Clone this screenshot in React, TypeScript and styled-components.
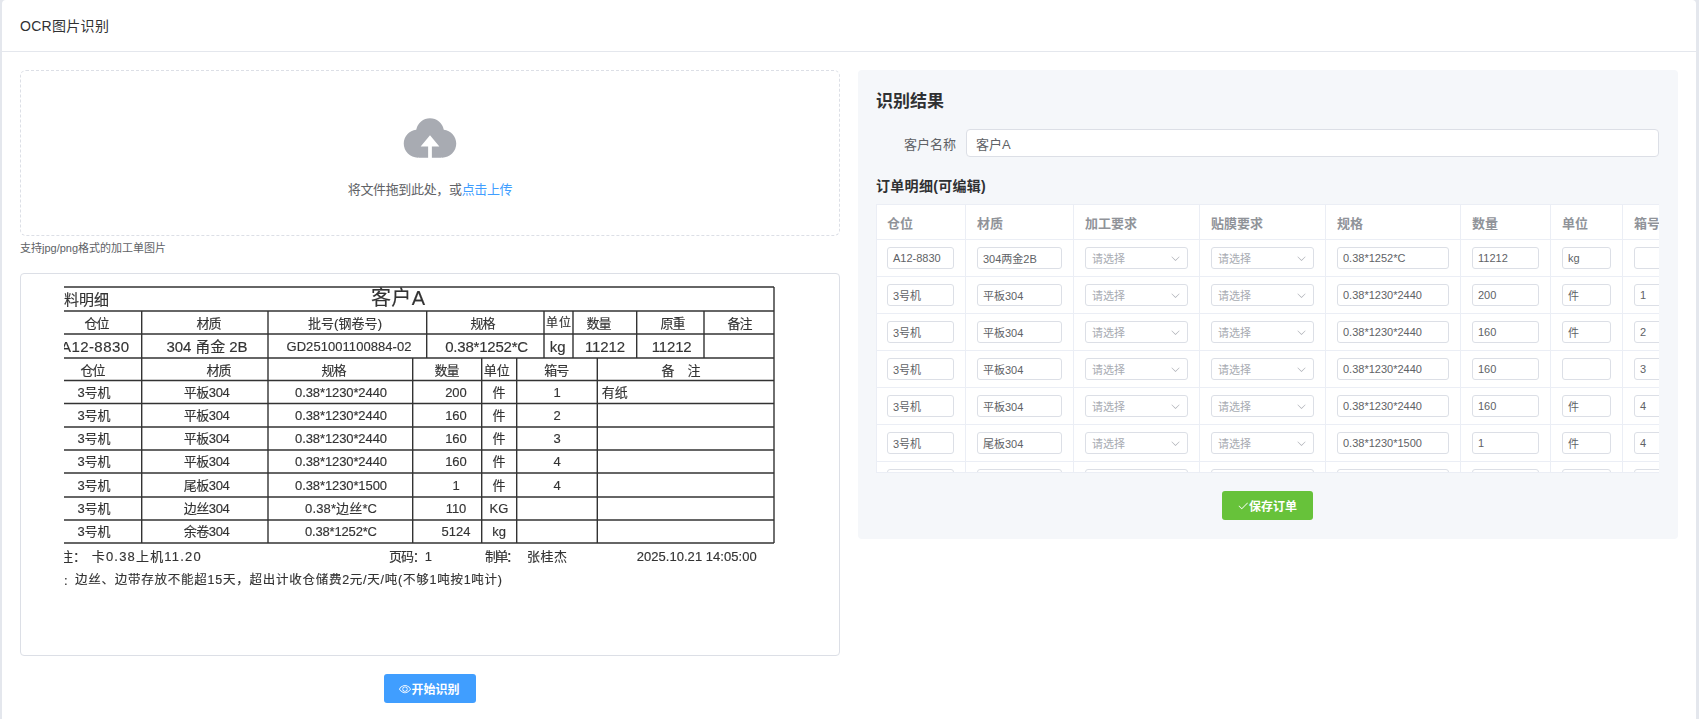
import React from "react";
import styled, { createGlobalStyle } from "styled-components";

const FONT = `"Liberation Sans", "Noto Sans CJK SC", sans-serif`;

const Global = createGlobalStyle`
  html, body { margin: 0; padding: 0; height: 100%; overflow: hidden; background: #e4e7ed; }
  #root { height: 100%; }
  * { box-sizing: border-box; }
`;

const Shell = styled.div`
  height: 100%;
  padding: 0 3px 0 2px;
  font-family: ${FONT};
  color: #303133;
`;
const Card = styled.div`
  height: 100%;
  background: #fff;
  border-radius: 4px 4px 0 0;
  overflow: hidden;
`;
const Header = styled.div`
  height: 52px;
  padding: 0 18px 1px;
  display: flex;
  align-items: center;
  font-size: 14px;
  letter-spacing: 0.3px;
  color: #303133;
  border-bottom: 1px solid #e4e7ed;
`;
const Body = styled.div`
  display: grid;
  grid-template-columns: 820px 820px;
  gap: 18px;
  padding: 18px;
  align-items: start;
`;
const Column = styled.div`
  display: flex;
  flex-direction: column;
`;
const Dropzone = styled.div`
  height: 166px;
  padding-top: 36px;
  border: 1px dashed #dcdfe6;
  border-radius: 6px;
  display: flex;
  flex-direction: column;
  align-items: center;
`;
const CloudIcon = styled.svg`
  width: 60px;
  height: 60px;
  fill: #a8abb2;
`;
const DropText = styled.div`
  margin-top: 13px;
  font-size: 13px;
  line-height: 20px;
  letter-spacing: -0.35px;
  color: #606266;
`;
const DropLink = styled.em`
  font-style: normal;
  color: #409eff;
`;
const Tip = styled.div`
  margin-top: 5px;
  font-size: 11px;
  line-height: 14px;
  color: #606266;
`;
const Preview = styled.div`
  margin-top: 18px;
  height: 383px;
  border: 1px solid #dcdfe6;
  border-radius: 4px;
  overflow: hidden;
`;
const Scan = styled.svg`
  display: block;
  width: 818px;
  height: 381px;
  filter: blur(0.3px);
  font-family: ${FONT};
  text { fill: #333; stroke: #333; stroke-width: 0.15px; dominant-baseline: central; }
  line { stroke: #333; stroke-width: 1.4; }
`;
const ActionRow = styled.div`
  margin-top: 18px;
  display: flex;
  justify-content: center;
`;
const ActionButton = styled.button<{ $tone: string }>`
  height: 29px;
  padding: 0 16px 0 15px;
  border: 0;
  border-radius: 3px;
  background: ${(p) => p.$tone};
  color: #fff;
  font-family: ${FONT};
  font-size: 12px;
  font-weight: 700;
  display: inline-flex;
  align-items: center;
`;
const BtnIcon = styled.svg`
  width: 12px;
  height: 12px;
  fill: currentColor;
`;
const Panel = styled.div`
  background: #f5f7fa;
  border-radius: 4px;
  padding: 20px 19px 19px 18px;
`;
const PanelTitle = styled.h3`
  margin: 0 0 15px;
  font-size: 17px;
  line-height: 24px;
  font-weight: 700;
  color: #303133;
`;
const FormRow = styled.div`
  display: flex;
  align-items: center;
`;
const FormLabel = styled.label`
  width: 90px;
  padding-right: 10px;
  text-align: right;
  font-size: 13px;
  color: #606266;
`;
const TextBox = styled.div`
  flex: 1;
  height: 28px;
  padding: 0 9px;
  display: flex;
  align-items: center;
  background: #fff;
  border: 1px solid #dcdfe6;
  border-radius: 4px;
  font-size: 13px;
  color: #606266;
`;
const SubTitle = styled.h4`
  margin: 19px 0 8px;
  font-size: 14px;
  line-height: 20px;
  letter-spacing: 0.3px;
  font-weight: 700;
  color: #303133;
`;
const TableWrap = styled.div`
  height: 269px;
  overflow: hidden;
  background: #fff;
  border: 1px solid #ebeef5;
  border-right: 0;
`;
const Table = styled.table`
  table-layout: fixed;
  width: 836px;
  border-collapse: separate;
  border-spacing: 0;
`;
const Th = styled.th`
  height: 35px;
  padding: 0 11px;
  text-align: left;
  font-size: 13px;
  font-weight: 700;
  color: #909399;
  white-space: nowrap;
  overflow: hidden;
  border-right: 1px solid #ebeef5;
  border-bottom: 1px solid #ebeef5;
  &:first-child { padding-left: 10px; }
`;
const Td = styled.td`
  height: 37px;
  padding: 7px 11px;
  border-right: 1px solid #ebeef5;
  border-bottom: 1px solid #ebeef5;
  &:first-child { padding-left: 10px; }
`;
const Field = styled.div`
  width: 100%;
  height: 22px;
  padding: 0 5px;
  display: flex;
  align-items: center;
  justify-content: space-between;
  background: #fff;
  border: 1px solid #dcdfe6;
  border-radius: 3px;
  font-size: 11px;
  color: #606266;
  white-space: nowrap;
`;
const SelectField = styled(Field)`
  padding: 0 6px;
  color: #a8abb2;
`;
const Chevron = styled.svg`
  width: 11px;
  height: 11px;
  fill: #a8abb2;
`;

const COLS = [89, 108, 126, 126, 135, 90, 72, 90];
const HEADS = ["仓位", "材质", "加工要求", "贴膜要求", "规格", "数量", "单位", "箱号"];
const ROWS: string[][] = [
  ["A12-8830", "304两金2B", "0.38*1252*C", "11212", "kg", ""],
  ["3号机", "平板304", "0.38*1230*2440", "200", "件", "1"],
  ["3号机", "平板304", "0.38*1230*2440", "160", "件", "2"],
  ["3号机", "平板304", "0.38*1230*2440", "160", "", "3"],
  ["3号机", "平板304", "0.38*1230*2440", "160", "件", "4"],
  ["3号机", "尾板304", "0.38*1230*1500", "1", "件", "4"],
  ["3号机", "边丝304", "0.38*边丝*C", "110", "KG", ""],
];

const SelectCell = () => (
  <Td>
    <SelectField>
      请选择
      <Chevron viewBox="0 0 1024 1024">
        <path d="M831.872 340.864 512 652.672 192.128 340.864a30.592 30.592 0 0 0-42.752 0 29.12 29.12 0 0 0 0 41.6L489.664 714.24a32 32 0 0 0 44.672 0l340.288-331.712a29.12 29.12 0 0 0 0-41.6 30.592 30.592 0 0 0-42.752 0z" />
      </Chevron>
    </SelectField>
  </Td>
);

type TextSpec = { x: number; y: number; t: string; s?: number; w?: number; start?: boolean };
const T = ({ x, y, t, s = 13, w, start }: TextSpec) => (
  <text
    x={x}
    y={y}
    fontSize={s}
    textAnchor={start ? "start" : "middle"}
    {...(w ? { textLength: w, lengthAdjust: "spacing" } : {})}
  >
    {t}
  </text>
);

const H_LINES = [287, 311, 334, 358, 380.5, 403.5, 427, 450, 473, 497, 520, 543];
const TOP_V = [141.7, 268, 426.7, 544, 573, 636.7, 704];
const LOW_V = [141.7, 268, 412.7, 481.7, 516.7, 597.3];
const ROW_Y = [392, 415, 438.5, 461.5, 485, 508.5, 531.5];
const SCAN_ROWS = [
  ["平板304", "0.38*1230*2440", "200", "件", "1", 92],
  ["平板304", "0.38*1230*2440", "160", "件", "2", 92],
  ["平板304", "0.38*1230*2440", "160", "件", "3", 92],
  ["平板304", "0.38*1230*2440", "160", "件", "4", 92],
  ["尾板304", "0.38*1230*1500", "1", "件", "4", 92],
  ["边丝304", "0.38*边丝*C", "110", "KG", "", 72],
  ["余卷304", "0.38*1252*C", "5124", "kg", "", 72],
] as const;

const ScanImage = () => (
  <Scan viewBox="21 274 818 381">
    <defs>
      <clipPath id="sheet">
        <rect x="64" y="280" width="720" height="320" />
      </clipPath>
    </defs>
    <g clipPath="url(#sheet)">
      {H_LINES.map((y) => (
        <line key={y} x1="64" x2="774" y1={y} y2={y} />
      ))}
      <line x1="774" x2="774" y1="287" y2="543" />
      {TOP_V.map((x) => (
        <line key={x} x1={x} x2={x} y1="311" y2="358" />
      ))}
      {LOW_V.map((x) => (
        <line key={x} x1={x} x2={x} y1="358" y2="543" />
      ))}
      <T x={64} y={299} t="料明细" s={15} w={45} start />
      <T x={398} y={298} t="客户A" s={20} w={54} />
      <T x={97} y={323} t="仓位" w={25} />
      <T x={209} y={323} t="材质" w={25} />
      <T x={345} y={323} t="批号(钢卷号)" w={74} />
      <T x={483} y={323} t="规格" w={25} />
      <T x={558.5} y={323} t="单位" s={12} w={25} />
      <T x={599} y={323} t="数量" w={25} />
      <T x={673} y={323} t="原重" w={25} />
      <T x={740} y={323} t="备注" w={25} />
      <T x={95} y={346} t="A12-8830" s={15} w={68} />
      <T x={207} y={346} t="304 甬金 2B" s={15} w={81} />
      <T x={349} y={346} t="GD251001100884-02" s={13} w={125} />
      <T x={486.7} y={346} t="0.38*1252*C" s={15} w={83} />
      <T x={557.7} y={346} t="kg" s={15} />
      <T x={605} y={346} t="11212" s={15} w={40} />
      <T x={671.7} y={346} t="11212" s={15} w={40} />
      <T x={93} y={370.5} t="仓位" w={25} />
      <T x={219} y={370.5} t="材质" w={25} />
      <T x={334} y={370.5} t="规格" w={25} />
      <T x={447} y={370.5} t="数量" w={25} />
      <T x={496.7} y={370.5} t="单位" w={26} />
      <T x={556.7} y={370.5} t="箱号" w={25} />
      <T x={681} y={370.5} t="备   注" w={39} />
      {SCAN_ROWS.map((r, i) => (
        <g key={i}>
          <T x={94} y={ROW_Y[i]} t="3号机" w={33} />
          <T x={206.7} y={ROW_Y[i]} t={r[0]} w={46} />
          <T x={341} y={ROW_Y[i]} t={r[1]} w={r[5]} />
          <T x={456} y={ROW_Y[i]} t={r[2]} />
          <T x={499} y={ROW_Y[i]} t={r[3]} />
          <T x={557} y={ROW_Y[i]} t={r[4]} />
        </g>
      ))}
      <T x={601.7} y={392} t="有纸" w={26} start />
      <T x={60} y={556} t="注：" w={26} start />
      <T x={91.7} y={556} t="卡0.38上机11.20" w={109} start />
      <T x={389} y={556} t="页码：1" w={43} start />
      <T x={485} y={556} t="制单：" w={34} start />
      <T x={527} y={556} t="张桂杰" w={40} start />
      <T x={636.7} y={556} t="2025.10.21 14:05:00" w={120} start />
      <T x={64} y={580} t=":" start />
      <T x={75} y={580} t="边丝、边带存放不能超15天，超出计收仓储费2元/天/吨(不够1吨按1吨计)" s={12.5} w={427} start />
    </g>
  </Scan>
);

export default function App() {
  return (
    <Shell>
      <Global />
      <Card>
        <Header>OCR图片识别</Header>
        <Body>
          <Column>
            <Dropzone>
              <CloudIcon viewBox="0 0 1024 1024">
                <path d="M544 864V672h128L512 480 352 672h128v192H320v-1.6c-5.376.32-10.496 1.6-16 1.6A240 240 0 0 1 64 624c0-123.136 93.12-223.488 212.608-237.248A239.808 239.808 0 0 1 512 192a239.872 239.872 0 0 1 235.456 194.752c119.488 13.76 212.48 114.112 212.48 237.248a240 240 0 0 1-240 240c-5.376 0-10.56-1.28-16-1.6v1.6z" />
              </CloudIcon>
              <DropText>
                将文件拖到此处，或<DropLink>点击上传</DropLink>
              </DropText>
            </Dropzone>
            <Tip>支持jpg/png格式的加工单图片</Tip>
            <Preview>
              <ScanImage />
            </Preview>
            <ActionRow>
              <ActionButton $tone="#409eff">
                <BtnIcon viewBox="0 0 1024 1024">
                  <path d="M512 160c320 0 512 352 512 352S832 864 512 864 0 512 0 512s192-352 512-352m0 64c-225.28 0-384.128 208.064-436.8 288 52.608 79.872 211.456 288 436.8 288 225.28 0 384.128-208.064 436.8-288-52.608-79.872-211.456-288-436.8-288zm0 64a224 224 0 1 1 0 448 224 224 0 0 1 0-448m0 64a160.192 160.192 0 0 0-160 160c0 88.192 71.744 160 160 160s160-71.808 160-160-71.744-160-160-160" />
                </BtnIcon>
                开始识别
              </ActionButton>
            </ActionRow>
          </Column>
          <Panel>
            <PanelTitle>识别结果</PanelTitle>
            <FormRow>
              <FormLabel>客户名称</FormLabel>
              <TextBox>客户A</TextBox>
            </FormRow>
            <SubTitle>订单明细(可编辑)</SubTitle>
            <TableWrap>
              <Table>
                <colgroup>
                  {COLS.map((w, i) => (
                    <col key={i} width={w} />
                  ))}
                </colgroup>
                <thead>
                  <tr>
                    {HEADS.map((h) => (
                      <Th key={h}>{h}</Th>
                    ))}
                  </tr>
                </thead>
                <tbody>
                  {ROWS.map((r, i) => (
                    <tr key={i}>
                      <Td><Field>{r[0]}</Field></Td>
                      <Td><Field>{r[1]}</Field></Td>
                      <SelectCell />
                      <SelectCell />
                      <Td><Field>{r[2]}</Field></Td>
                      <Td><Field>{r[3]}</Field></Td>
                      <Td><Field>{r[4]}</Field></Td>
                      <Td><Field>{r[5]}</Field></Td>
                    </tr>
                  ))}
                </tbody>
              </Table>
            </TableWrap>
            <ActionRow>
              <ActionButton $tone="#67c23a">
                <BtnIcon viewBox="0 0 1024 1024">
                  <path d="M406.656 706.944 195.84 496.256a32 32 0 1 0-45.248 45.248l256 256 512-512a32 32 0 0 0-45.248-45.248L406.592 706.944z" />
                </BtnIcon>
                保存订单
              </ActionButton>
            </ActionRow>
          </Panel>
        </Body>
      </Card>
    </Shell>
  );
}
